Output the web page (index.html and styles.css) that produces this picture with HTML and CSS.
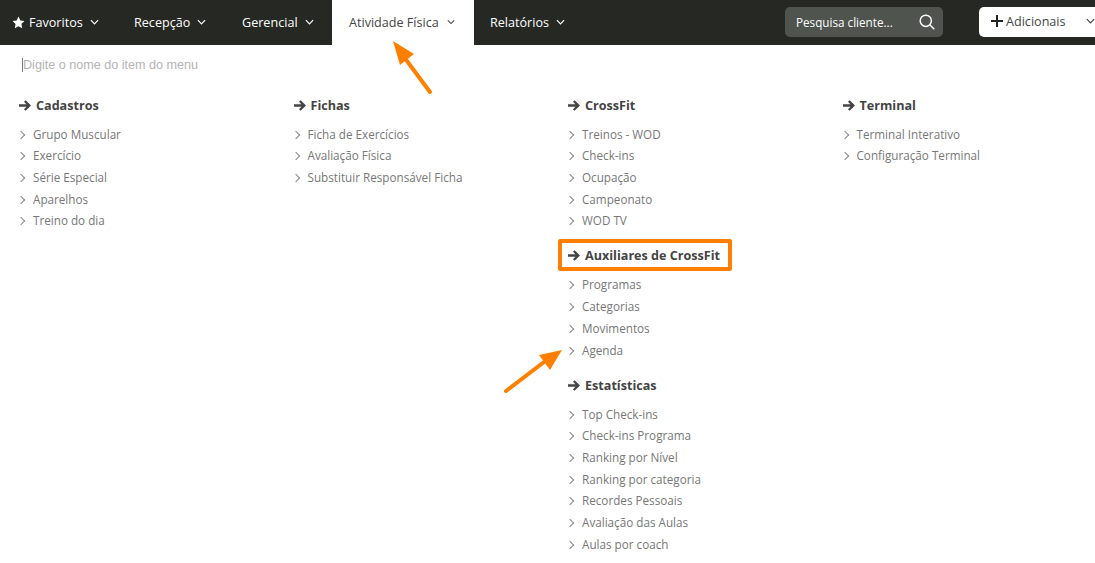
FILE: index.html
```html
<!DOCTYPE html>
<html lang="pt-BR">
<head>
<meta charset="utf-8">
<title>Atividade Física</title>
<link rel="stylesheet" href="styles.css">
</head>
<body>
<header class="topbar">
  <nav class="nav">
    <a class="nav-item nav-fav">
      <svg class="star" viewBox="0 0 24 24"><path d="M12 1l3.4 7.2 7.6 1-5.6 5.4 1.5 7.9L12 18.7l-6.9 3.8 1.5-7.9L1 9.200l7.600-1z"/></svg>
      <span>Favoritos</span>
      <svg class="chev" viewBox="0 0 10 6"><path d="M1 1l4 4 4-4"/></svg>
    </a>
    <a class="nav-item nav-rec"><span>Recepção</span><svg class="chev" viewBox="0 0 10 6"><path d="M1 1l4 4 4-4"/></svg></a>
    <a class="nav-item nav-ger"><span>Gerencial</span><svg class="chev" viewBox="0 0 10 6"><path d="M1 1l4 4 4-4"/></svg></a>
    <a class="nav-item nav-ativ"><span>Atividade Física</span><svg class="chev" viewBox="0 0 10 6"><path d="M1 1l4 4 4-4"/></svg></a>
    <a class="nav-item nav-rel"><span>Relatórios</span><svg class="chev" viewBox="0 0 10 6"><path d="M1 1l4 4 4-4"/></svg></a>
  </nav>
  <div class="search">
    <span>Pesquisa cliente...</span>
    <svg class="lens" viewBox="0 0 16 16"><circle cx="6.800" cy="6.800" r="5.600"/><path d="M10.800 10.800L15.300 15.300"/></svg>
  </div>
  <div class="add">
    <svg class="plus" viewBox="0 0 12 12"><path d="M6 0v12M0 6h12"/></svg>
    <span>Adicionais</span>
    <svg class="chev" viewBox="0 0 10 6"><path d="M1 1l4 4 4-4"/></svg>
  </div>
</header>

<div class="filter"><span class="caret"></span><span>Digite o nome do item do menu</span></div>

<main class="menu">
  <section class="col">
    <h2 class="head"><svg class="arrow" viewBox="0 0 13 11"><path d="M0 5.500h9.500M5.800 1l4.500 4.500L5.800 10"/></svg>Cadastros</h2>
    <ul class="list">
      <li>Grupo Muscular</li><li>Exercício</li><li>Série Especial</li><li>Aparelhos</li><li>Treino do dia</li>
    </ul>
  </section>
  <section class="col">
    <h2 class="head"><svg class="arrow" viewBox="0 0 13 11"><path d="M0 5.500h9.500M5.800 1l4.500 4.500L5.800 10"/></svg>Fichas</h2>
    <ul class="list">
      <li>Ficha de Exercícios</li><li>Avaliação Física</li><li>Substituir Responsável Ficha</li>
    </ul>
  </section>
  <section class="col">
    <h2 class="head"><svg class="arrow" viewBox="0 0 13 11"><path d="M0 5.500h9.500M5.800 1l4.500 4.500L5.800 10"/></svg>CrossFit</h2>
    <ul class="list">
      <li>Treinos - WOD</li><li>Check-ins</li><li>Ocupação</li><li>Campeonato</li><li>WOD TV</li>
    </ul>
    <h2 class="head head-marked"><svg class="arrow" viewBox="0 0 13 11"><path d="M0 5.500h9.500M5.800 1l4.500 4.500L5.800 10"/></svg>Auxiliares de CrossFit</h2>
    <ul class="list">
      <li>Programas</li><li>Categorias</li><li>Movimentos</li><li>Agenda</li>
    </ul>
    <h2 class="head"><svg class="arrow" viewBox="0 0 13 11"><path d="M0 5.500h9.500M5.800 1l4.500 4.500L5.800 10"/></svg>Estatísticas</h2>
    <ul class="list">
      <li>Top Check-ins</li><li>Check-ins Programa</li><li>Ranking por Nível</li><li>Ranking por categoria</li><li>Recordes Pessoais</li><li>Avaliação das Aulas</li><li>Aulas por coach</li>
    </ul>
  </section>
  <section class="col">
    <h2 class="head"><svg class="arrow" viewBox="0 0 13 11"><path d="M0 5.500h9.500M5.800 1l4.500 4.500L5.800 10"/></svg>Terminal</h2>
    <ul class="list">
      <li>Terminal Interativo</li><li>Configuração Terminal</li>
    </ul>
  </section>
</main>

<svg class="annot annot-top" viewBox="0 0 50 60"><path class="shaft" d="M40 52L14 17"/><path class="tip" d="M3 1L24 14L10 25z"/></svg>
<svg class="annot annot-agenda" viewBox="0 0 70 60"><path class="shaft" d="M6 49L44 20"/><path class="tip" d="M62 8L50 28L39 13z"/></svg>
</body>
</html>
```

FILE: styles.css
```css
*, *::before, *::after { box-sizing: border-box; }
html, body { margin: 0; padding: 0; }
body {
  width: 1095px;
  height: 563px;
  overflow: hidden;
  position: relative;
  background: #fff;
  font-family: "Open Sans", sans-serif;
  color: #777;
}
.topbar {
  height: 45px;
  padding-bottom: 1px;
  background: #252823;
  display: flex;
  align-items: flex-start;
  white-space: nowrap;
  overflow: hidden;
}
.nav { display: flex; height: 45px; width: 785px; flex: none; }
.nav-item {
  display: flex;
  align-items: center;
  height: 45px;
  padding-bottom: 1px;
  color: #fff;
  font-size: 12.600px;
  flex: none;
}
.nav-fav { padding-left: 12px; width: 118px; }
.nav-rec { padding-left: 16px; width: 124px; }
.nav-ger { padding-left: 0; width: 90px; }
.nav-ativ { background: #fff; color: #444; width: 142px; padding-left: 17px; }
.nav-rel { padding-left: 16px; }
.star { width: 13px; height: 13px; fill: #fff; margin-right: 4px; }
.chev { width: 9px; height: 6px; margin-left: 7px; fill: none; stroke: currentColor; stroke-width: 1.300; }
.nav-ativ .chev { width: 8px; margin-left: 8px; }
.search {
  width: 158px;
  height: 30px;
  margin-top: 7px;
  flex: none;
  background: #50544f;
  border-radius: 5px;
  color: #fff;
  font-size: 11.700px;
  display: flex;
  align-items: center;
  justify-content: space-between;
  padding: 0 8px 0 11px;
}
.lens { width: 16px; height: 16px; fill: none; stroke: #fff; stroke-width: 1.500; }
.add {
  margin: 7px 0 0 36px;
  width: 130px;
  height: 30px;
  padding: 0 0 2px 12px;
  flex: none;
  background: #fff;
  border-radius: 5px;
  color: #444;
  font-size: 12.600px;
  display: flex;
  align-items: center;
}
.plus { width: 12px; height: 12px; fill: none; stroke: #222; stroke-width: 2; margin-right: 3px; }
.add .chev { margin-left: 20px; }
.filter {
  height: 39px;
  padding-left: 22px;
  display: flex;
  align-items: center;
  font-family: "Liberation Sans", Arial, sans-serif;
  font-size: 12.600px;
  color: #b4b4b4;
}
.caret { width: 1px; height: 14px; background: #777; }
.menu {
  display: grid;
  grid-template-columns: repeat(4, 274.500px);
  padding: 12px 0 0 19px;
  align-items: start;
}
.head {
  position: relative;
  margin: 0;
  height: 18px;
  display: flex;
  align-items: center;
  color: #444;
  font-size: 12.600px;
  font-weight: 700;
  white-space: nowrap;
}
.arrow {
  width: 13px;
  height: 11px;
  margin-right: 4px;
  fill: none;
  stroke: #444;
  stroke-width: 2.400;
}
.head-marked::before {
  content: "";
  position: absolute;
  left: -10px;
  top: -8px;
  width: 174px;
  height: 32px;
  border: 4px solid #ff8000;
  border-radius: 2px;
}
.list { list-style: none; margin: 9.500px 0 15px; padding: 0; }
.list li {
  position: relative;
  height: 21.700px;
  line-height: 21.700px;
  padding-left: 14px;
  font-size: 11.700px;
  color: #777;
  white-space: nowrap;
}
.list li::before {
  content: "";
  position: absolute;
  left: -1px;
  top: 8px;
  width: 6px;
  height: 6px;
  border-top: 1px solid #888;
  border-right: 1px solid #888;
  transform: rotate(45deg);
}
.annot { position: absolute; }
.annot-top { left: 390px; top: 40px; width: 50px; height: 60px; }
.annot-agenda { left: 500px; top: 342px; width: 70px; height: 60px; }
.shaft { fill: none; stroke: #ff8000; stroke-width: 4; stroke-linecap: round; }
.tip { fill: #ff8000; }
```
